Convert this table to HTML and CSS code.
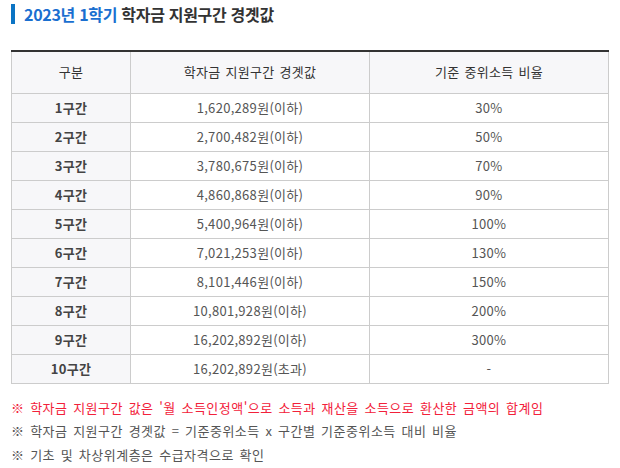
FILE: index.html
```html
<!DOCTYPE html>
<html lang="ko">
<head>
<meta charset="utf-8">
<link rel="stylesheet" href="styles.css">
</head>
<body>
<div class="page">
  <h2 class="title"><span class="hl">2023년 1학기</span> 학자금 지원구간 경곗값</h2>
  <table class="grid">
    <thead>
      <tr><th class="c1">구분</th><th class="c2">학자금 지원구간 경곗값</th><th class="c3">기준 중위소득 비율</th></tr>
    </thead>
    <tbody>
      <tr><th>1구간</th><td>1,620,289원(이하)</td><td>30%</td></tr>
      <tr><th>2구간</th><td>2,700,482원(이하)</td><td>50%</td></tr>
      <tr><th>3구간</th><td>3,780,675원(이하)</td><td>70%</td></tr>
      <tr><th>4구간</th><td>4,860,868원(이하)</td><td>90%</td></tr>
      <tr><th>5구간</th><td>5,400,964원(이하)</td><td>100%</td></tr>
      <tr><th>6구간</th><td>7,021,253원(이하)</td><td>130%</td></tr>
      <tr><th>7구간</th><td>8,101,446원(이하)</td><td>150%</td></tr>
      <tr><th>8구간</th><td>10,801,928원(이하)</td><td>200%</td></tr>
      <tr><th>9구간</th><td>16,202,892원(이하)</td><td>300%</td></tr>
      <tr><th>10구간</th><td>16,202,892원(초과)</td><td>-</td></tr>
    </tbody>
  </table>
  <ul class="notes">
    <li class="red">※ 학자금 지원구간 값은 '월 소득인정액'으로 소득과 재산을 소득으로 환산한 금액의 합계임</li>
    <li>※ 학자금 지원구간 경곗값 = 기준중위소득 x 구간별 기준중위소득 대비 비율</li>
    <li>※ 기초 및 차상위계층은 수급자격으로 확인</li>
  </ul>
</div>
</body>
</html>
```

FILE: styles.css
```css
* { box-sizing: border-box; }
html, body { margin: 0; padding: 0; background: #fff; }
body {
  font-family: "Noto Sans CJK KR", "Noto Sans", sans-serif;
  color: #555;
  font-size: 13px;
}
.page { padding: 4px 12px 0 11px; }
.title {
  margin: 0;
  border-left: 4px solid #0b74c4;
  padding-left: 9px;
  height: 20px;
  line-height: 20px;
  font-size: 16px;
  font-weight: 700;
  color: #333;
  letter-spacing: -0.3px;
}
.title .hl { color: #1a6fd0; }
.grid {
  margin-top: 26px;
  width: 597px;
  border-collapse: collapse;
  border-top: 2px solid #333;
  table-layout: fixed;
}
.grid th, .grid td {
  border: 1px solid #ccc;
  text-align: center;
  padding: 0;
  height: 29px;
  font-size: 13px;
  line-height: 16px;
  letter-spacing: 0.3px;
  word-spacing: 1px;
}
.grid thead th {
  height: 42px;
  background: #f7f7f9;
  font-weight: 400;
  color: #333;
  border-top: 0;
}
.grid .c1 { width: 119px; }
.grid .c2 { width: 239px; }
.grid .c3 { width: 239px; }
.grid tbody th {
  background: #f7f7f9;
  font-weight: 700;
  color: #444;
}
.grid tbody td { color: #555; }
.notes {
  list-style: none;
  margin: 12px 0 0;
  padding: 0;
}
.notes li {
  font-size: 13px;
  line-height: 23.5px;
  color: #555;
  letter-spacing: 0.5px;
  word-spacing: 1.5px;
}
.notes .red { color: #f2213a; }
```
